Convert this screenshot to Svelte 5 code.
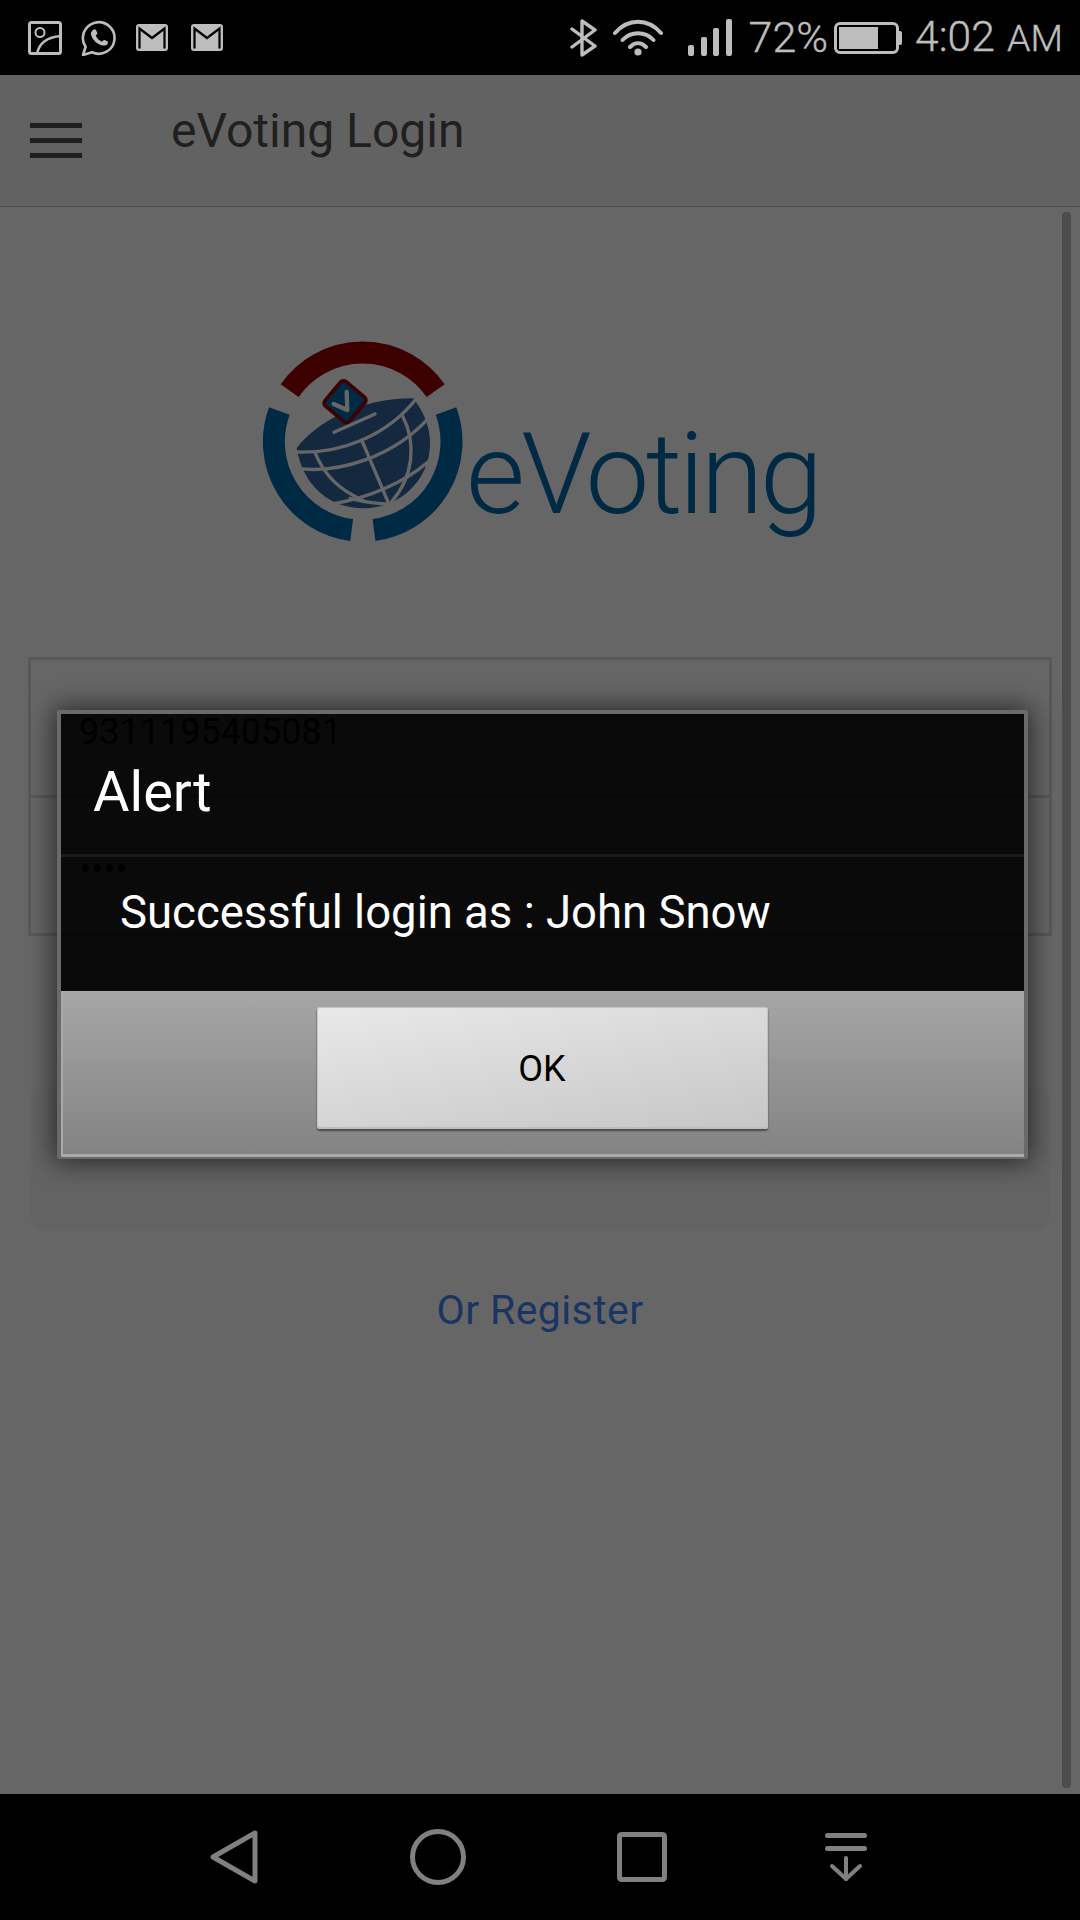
<script>
  let username = '9311195405081';
  let password = '••••';
  let message = 'Successful login as : John Snow';
</script>

<div class="screen">
  <div class="status">
    <div class="status-left">
      <svg class="i-img" viewBox="0 0 34 34" fill="none" stroke="#bdbdbd" stroke-width="3">
        <rect x="1.5" y="1.5" width="31" height="31" rx="2" />
        <circle cx="12" cy="11.5" r="4.5" stroke-width="2" />
        <path d="M9 33 C11 22 20 16 33 15" stroke-width="2.5" />
      </svg>
      <svg class="i-wa" viewBox="0 0 36 36" fill="none" stroke="#bdbdbd" stroke-width="2.6">
        <path d="M2 35 L4.6 26.8 A15.8 15.8 0 1 1 11 32.3 Z" stroke-linejoin="round" />
        <path d="M12.2 9.5 L14.8 9.5 L16.5 13.4 L14.8 15.6 C15.8 18.4 18 20.6 21 21.8 L23 19.8 L27 21.6 L26.6 24 C24.5 26.4 20 26 16 23 C12 20 9.5 15.5 10 12.4 Z" fill="#bdbdbd" stroke="none" />
      </svg>
      <svg class="i-mail" viewBox="0 0 32 27">
        <rect width="32" height="27" rx="3" fill="#bdbdbd" />
        <path d="M3.5 24.5 V4.5 L16 14 L28.5 4.5 V24.5" fill="none" stroke="#000" stroke-width="2.2" />
      </svg>
      <svg class="i-mail" viewBox="0 0 32 27">
        <rect width="32" height="27" rx="3" fill="#bdbdbd" />
        <path d="M3.5 24.5 V4.5 L16 14 L28.5 4.5 V24.5" fill="none" stroke="#000" stroke-width="2.2" />
      </svg>
    </div>
    <div class="status-right">
      <svg class="i-bt" viewBox="0 0 28 38" fill="none" stroke="#bdbdbd" stroke-width="3.4" stroke-linejoin="round" stroke-linecap="round">
        <path d="M2 10 L25 27 L12 36 V2 L25 11 L2 28" />
      </svg>
      <svg class="i-wifi" viewBox="0 0 50 37" fill="none" stroke="#bdbdbd" stroke-width="4" stroke-linecap="round">
        <path d="M2 14 C15 -1 35 -1 48 14" />
        <path d="M9.5 21 C18 12 32 12 40.5 21" />
        <path d="M17 28 C22 23 28 23 33 28" />
        <circle cx="25" cy="33" r="3.6" fill="#bdbdbd" stroke="none" />
      </svg>
      <div class="signal">
        <span class="b1"></span><span class="b2"></span><span class="b3"></span><span class="b4"></span>
      </div>
      <span class="pct">72%</span>
      <div class="battery"><div class="charge"></div></div>
      <span class="clock">4:02 <small>AM</small></span>
    </div>
  </div>

  <div class="app">
    <header>
      <div class="burger"><span></span><span></span><span></span></div>
      <h1>eVoting Login</h1>
    </header>

    <main>
      <svg class="logo" viewBox="0 0 1740 660">
        <g fill="none" stroke-width="66">
          <path d="M119 182 A267 267 0 0 1 557 182" stroke="#960000" />
          <path d="M88 243 A267 267 0 0 0 305 600" stroke="#006aa8" />
          <path d="M588 243 A267 267 0 0 1 372 600" stroke="#006aa8" />
        </g>
        <path d="M140 355 C200 275 330 205 490 205 C525 250 542 300 540 345 C538 450 450 535 340 535 C240 535 160 470 140 355 Z" fill="#34679e" />
        <g fill="none" stroke="#fff" stroke-width="10" stroke-linecap="round">
          <path d="M252 307 L375 252" />
          <path d="M138 366 C270 372 410 320 500 205" />
          <path d="M145 416 C270 430 430 380 535 265" />
          <path d="M255 520 C350 505 460 460 535 395" />
          <path d="M195 368 C225 440 270 480 340 512" />
          <path d="M335 330 L415 518" />
          <path d="M458 258 C500 340 490 440 425 515" />
          <path d="M300 505 C340 515 380 522 420 522" />
        </g>
        <rect x="237" y="167" width="96" height="96" rx="12" transform="rotate(40 285 215)" fill="#006aa8" stroke="#960000" stroke-width="11" />
        <path d="M251 222 L292 240 L290 186" fill="none" stroke="#fff" stroke-width="13" stroke-linecap="round" stroke-linejoin="round" />
        <text class="logo-text" x="648" y="549" textLength="1071" lengthAdjust="spacing">eVoting</text>
      </svg>

      <div class="fields">
        <input class="field" type="text" value={username} />
        <input class="field second" type="text" value={password} />
      </div>

      <div class="login-well"></div>

      <a class="register" href="#register">Or Register</a>
    </main>

    <div class="scrollbar"></div>

    <div class="overlay">
      <div class="dialog">
        <div class="dialog-title">Alert</div>
        <div class="dialog-msg">{message}</div>
        <div class="dialog-foot">
          <button type="button">OK</button>
        </div>
      </div>
    </div>
  </div>

  <nav>
    <svg class="n-back" viewBox="0 0 48 54" fill="none" stroke="#808080" stroke-width="5" stroke-linejoin="round">
      <path d="M45 3 L3 27 L45 51 Z" />
    </svg>
    <svg class="n-home" viewBox="0 0 56 56" fill="none" stroke="#808080" stroke-width="5">
      <circle cx="28" cy="28" r="25.5" />
    </svg>
    <svg class="n-recent" viewBox="0 0 50 50" fill="none" stroke="#808080" stroke-width="5" stroke-linejoin="round">
      <rect x="2.5" y="2.5" width="45" height="45" rx="2" />
    </svg>
    <svg class="n-down" viewBox="0 0 42 48" fill="none" stroke="#808080" stroke-width="5" stroke-linecap="round">
      <path d="M2.5 2.5 H39.5" />
      <path d="M2.5 15.5 H39.5" />
      <path d="M21 25 V46" stroke-width="4" />
      <path d="M7 33 L21 46 L35 33" stroke-width="4" />
    </svg>
  </nav>
</div>

<style>
  :global(body) {
    margin: 0;
    background: #000;
  }

  .screen {
    width: 1080px;
    height: 1920px;
    display: flex;
    flex-direction: column;
    font-family: Roboto, "Liberation Sans", sans-serif;
    overflow: hidden;
  }

  /* status bar */
  .status {
    height: 75px;
    background: #000;
    display: flex;
    justify-content: space-between;
    align-items: center;
    color: #bdbdbd;
    flex-shrink: 0;
  }

  .status-left {
    display: flex;
    align-items: center;
    padding-left: 28px;
    gap: 19px;
  }

  .i-img { width: 34px; height: 34px; }
  .i-wa { width: 36px; height: 36px; }
  .i-mail { width: 32px; height: 27px; margin-right: 4px; }

  .status-right {
    display: flex;
    align-items: center;
    padding-right: 17px;
  }

  .i-bt { width: 28px; height: 38px; }
  .i-wifi { width: 50px; height: 37px; margin-left: 15px; }

  .signal {
    display: flex;
    align-items: flex-end;
    gap: 6.5px;
    height: 37px;
    margin-left: 25px;
  }

  .signal span {
    display: block;
    width: 6px;
    background: #bdbdbd;
    border-radius: 2px;
  }

  .b1 { height: 11px; }
  .b2 { height: 19px; }
  .b3 { height: 28px; }
  .b4 { height: 37px; }

  .pct {
    font-size: 43px;
    font-weight: 300;
    margin-left: 17px;
    line-height: 1;
    -webkit-text-stroke: 0.4px #bdbdbd;
  }

  .battery {
    width: 65px;
    height: 32px;
    box-sizing: border-box;
    border: 3px solid #bdbdbd;
    border-radius: 6px;
    margin-left: 6px;
    padding: 2px;
    position: relative;
  }

  .battery::after {
    content: '';
    position: absolute;
    right: -6px;
    top: 6px;
    width: 3px;
    height: 14px;
    background: #bdbdbd;
    border-radius: 0 2px 2px 0;
  }

  .charge {
    width: 39px;
    height: 100%;
    background: #bdbdbd;
  }

  .clock {
    font-size: 42.5px;
    font-weight: 300;
    margin-left: 16px;
    line-height: 1;
    white-space: nowrap;
    -webkit-text-stroke: 0.4px #bdbdbd;
  }

  .clock small {
    font-size: 37.5px;
    margin-left: 2px;
  }

  /* page under the dim layer */
  .app {
    position: relative;
    flex: 1;
    background: #fff;
    min-height: 0;
  }

  header {
    height: 131px;
    background: #f5f5f5;
    border-bottom: 1px solid #c4c4c4;
    display: flex;
  }

  .burger {
    width: 52px;
    margin: 48px 0 0 30px;
    display: flex;
    flex-direction: column;
    gap: 10px;
  }

  .burger span {
    display: block;
    height: 5px;
    background: #4d4d4d;
  }

  h1 {
    margin: 28px 0 0 89px;
    font-size: 48px;
    font-weight: 400;
    line-height: 56px;
    color: #525252;
  }

  main {
    padding-top: 123px;
    display: flex;
    flex-direction: column;
  }

  .logo {
    width: 580px;
    height: 220px;
    margin-left: 250px;
    flex-shrink: 0;
  }

  .logo-text {
    font-family: Roboto, sans-serif;
    font-weight: 300;
    font-size: 342px;
    fill: #006aa8;
  }

  .fields {
    margin: 107px 0 0 28px;
    width: 1024px;
    display: flex;
    flex-direction: column;
  }

  .field {
    height: 141px;
    box-sizing: border-box;
    border: 3px solid #dcdcdc;
    background: #fff;
    font: 400 36px Roboto, sans-serif;
    color: #000;
    padding: 8px 0 0 48px;
    outline: none;
    margin: 0;
    border-radius: 0;
  }

  .field.second {
    margin-top: -3px;
  }

  .login-well {
    margin: 151px 0 0 31px;
    width: 1018px;
    height: 142px;
    background: #f7f7f7;
    border-radius: 10px;
  }

  .register {
    margin-top: 59px;
    text-align: center;
    font-size: 41px;
    letter-spacing: 0.4px;
    line-height: 44px;
    color: #4285f4;
    text-decoration: none;
  }

  .scrollbar {
    position: absolute;
    top: 137px;
    right: 9px;
    width: 9px;
    height: 1576px;
    background: #c0c0c0;
    border-radius: 4px;
  }

  /* modal */
  .overlay {
    position: absolute;
    inset: 0;
    background: rgba(0, 0, 0, 0.6);
  }

  .dialog {
    position: absolute;
    top: 635px;
    left: 57px;
    width: 971px;
    box-sizing: border-box;
    border: 4px solid #6a6a6a;
    border-bottom-width: 2px;
    border-radius: 3px;
    box-shadow: 0 0 26px 3px rgba(0, 0, 0, 0.6);
    color: #fff;
  }

  .dialog-title {
    height: 143px;
    box-sizing: border-box;
    background: rgba(0, 0, 0, 0.9);
    border-bottom: 3px solid #1c1c1c;
    font-size: 56px;
    line-height: 64px;
    padding: 46px 0 0 32px;
  }

  .dialog-msg {
    height: 134px;
    box-sizing: border-box;
    background: rgba(0, 0, 0, 0.9);
    font-size: 45.5px;
    line-height: 54px;
    padding: 29px 0 0 59px;
  }

  .dialog-foot {
    height: 166px;
    box-sizing: border-box;
    background: linear-gradient(#a6a6a6, #838383);
    border: 2px solid #aaa;
    border-width: 1px 0 3px 2px;
    display: flex;
    justify-content: center;
    padding-top: 15px;
  }

  button {
    width: 451px;
    height: 122px;
    border: none;
    border-radius: 3px;
    background: linear-gradient(170deg, #e9e9e9, #c6c6c6);
    box-shadow: 0 2px 2px #4a4a4a, inset 0 -2px 1px #bcbcbc, inset 0 0 0 1px #c4c4c4;
    font: 400 36px Roboto, sans-serif;
    color: #000;
    margin: 0 0 0 -3px;
    padding: 2px 0 0;
  }

  /* nav bar */
  nav {
    height: 126px;
    background: #000;
    flex-shrink: 0;
    display: flex;
    align-items: center;
    padding-left: 210px;
  }

  .n-back { width: 48px; height: 54px; }
  .n-home { width: 56px; height: 56px; margin-left: 152px; }
  .n-recent { width: 50px; height: 50px; margin-left: 151px; }
  .n-down { width: 42px; height: 48px; margin-left: 158px; }
</style>
